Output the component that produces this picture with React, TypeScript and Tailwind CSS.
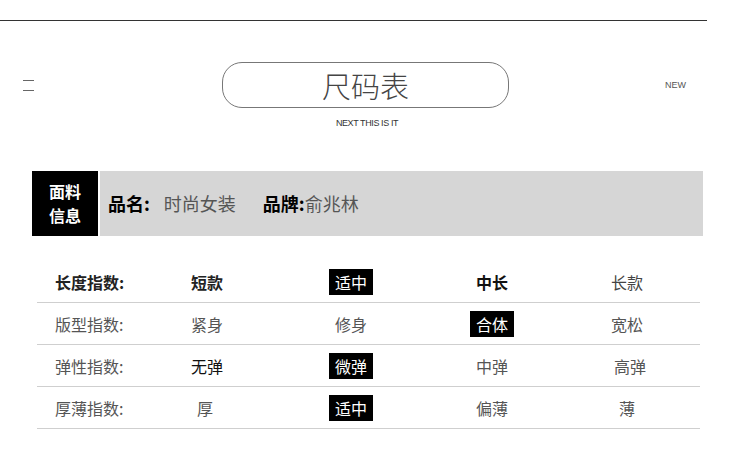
const font = { fontFamily: '"Noto Sans CJK SC", "Noto Sans", sans-serif' };

type Cell = { text: string; active?: boolean; cls?: string };

const rows: { label: string; labelCls: string; cells: Cell[] }[] = [
  {
    label: "长度指数:",
    labelCls: "font-bold text-[#222]",
    cells: [
      { text: "短款", cls: "font-semibold text-[#222]" },
      { text: "适中", active: true },
      { text: "中长", cls: "font-bold text-[#111]" },
      { text: "长款", cls: "text-[#444]" },
    ],
  },
  {
    label: "版型指数:",
    labelCls: "text-[#555]",
    cells: [
      { text: "紧身", cls: "text-[#555]" },
      { text: "修身", cls: "text-[#555]" },
      { text: "合体", active: true },
      { text: "宽松", cls: "text-[#555]" },
    ],
  },
  {
    label: "弹性指数:",
    labelCls: "text-[#555]",
    cells: [
      { text: "无弹", cls: "text-[#111]" },
      { text: "微弹", active: true },
      { text: "中弹", cls: "text-[#555]" },
      { text: "高弹", cls: "text-[#555] pl-[6px]" },
    ],
  },
  {
    label: "厚薄指数:",
    labelCls: "text-[#555]",
    cells: [
      { text: "厚", cls: "text-[#555] pr-[4px]" },
      { text: "适中", active: true },
      { text: "偏薄", cls: "text-[#555]" },
      { text: "薄", cls: "text-[#555]" },
    ],
  },
];

const colWidths = ["w-[140px]", "w-[148px]", "w-[134px]", "w-[136px]"];

export default function App() {
  return (
    <div className="w-[750px] h-[450px] bg-white overflow-hidden" style={font}>
      {/* top rule */}
      <div className="w-[707px] h-px bg-[#333] mt-[20px]" />

      {/* title row */}
      <div className="flex items-center mt-[41px] h-[46px]">
        <div className="ml-[23px] w-[11px] flex flex-col gap-[9px]">
          <div className="h-px bg-[#666]" />
          <div className="h-px bg-[#666]" />
        </div>
        <div className="ml-[188px] w-[287px] h-[46px] rounded-[20px] border border-[#777] flex items-center justify-center">
          <span className="text-[29px] font-light text-[#444] leading-none">尺码表</span>
        </div>
        <span
          className="ml-[156px] text-[9px] text-[#555] pt-[2px]"
          style={{ fontFamily: '"Liberation Sans", sans-serif' }}
        >
          NEW
        </span>
      </div>
      <div
        className="w-[734px] text-center text-[9px] text-[#333] tracking-[-0.4px] mt-[9px] leading-[12px]"
        style={{ fontFamily: '"Liberation Sans", sans-serif' }}
      >
        NEXT THIS IS IT
      </div>

      {/* fabric info bar */}
      <div className="flex ml-[32px] mt-[42px] h-[65px] gap-[2px]">
        <div className="w-[66px] bg-black text-white font-bold text-[16px] leading-[23.5px] flex items-center justify-center text-center">
          <span>
            面料
            <br />
            信息
          </span>
        </div>
        <div className="w-[603px] bg-[#d6d6d6] flex items-center pl-[8px] text-[18px]">
          <span className="font-bold text-black">品名:</span>
          <span className="ml-[14px] text-[#555]">时尚女装</span>
          <span className="ml-[27px] font-bold text-black">品牌:</span>
          <span className="text-[#555]">俞兆林</span>
        </div>
      </div>

      {/* index table */}
      <div className="ml-[37px] w-[663px] mt-[25px]">
        {rows.map((row) => (
          <div key={row.label} className="flex items-center h-[42px] border-b border-[#cfcfcf] text-[16px]">
            <div className={`w-[100px] pl-[18px] ${row.labelCls}`}>{row.label}</div>
            {row.cells.map((c, i) => (
              <div key={i} className={`${colWidths[i]} flex justify-center`}>
                {c.active ? (
                  <span className="bg-black text-white h-[26px] leading-[26px] px-[6px]">{c.text}</span>
                ) : (
                  <span className={c.cls}>{c.text}</span>
                )}
              </div>
            ))}
          </div>
        ))}
      </div>
    </div>
  );
}
